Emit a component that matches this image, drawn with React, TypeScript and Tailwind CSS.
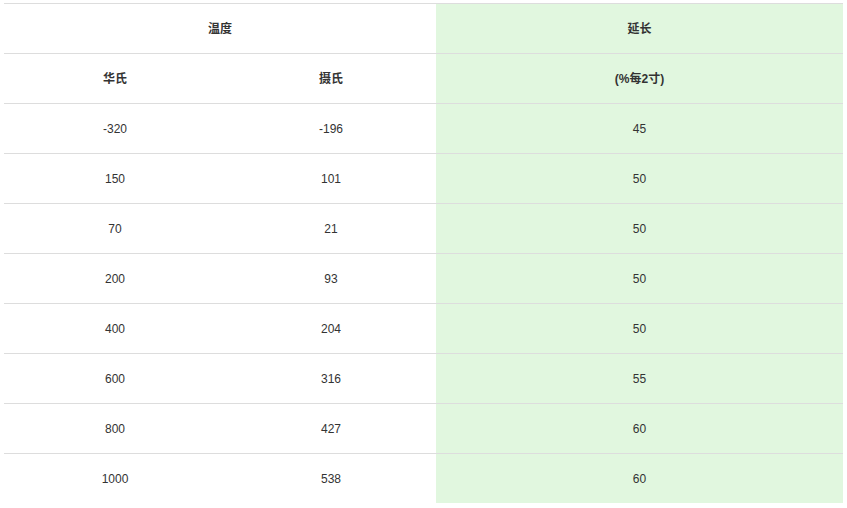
import React from "react";

const rows = [
  ["-320", "-196", "45"],
  ["150", "101", "50"],
  ["70", "21", "50"],
  ["200", "93", "50"],
  ["400", "204", "50"],
  ["600", "316", "55"],
  ["800", "427", "60"],
  ["1000", "538", "60"],
];

export default function App() {
  return (
    <div
      className="w-[847px] h-[508px] bg-white pt-[3px] px-[4px] text-[12px] text-[#333]"
      style={{ fontFamily: '"Liberation Sans", Arial, "Noto Sans CJK SC", sans-serif' }}
    >
      <div className="grid grid-cols-[222px_210px_407px]">
        <div className="col-span-2 h-[50px] border-t border-[#ddd] flex items-center justify-center font-bold">
          温度
        </div>
        <div className="h-[50px] border-t border-[#ddd] bg-[#e1f7df] flex items-center justify-center font-bold">
          延长
        </div>
        <div className="h-[50px] border-t border-[#ddd] flex items-center justify-center font-bold">华氏</div>
        <div className="h-[50px] border-t border-[#ddd] flex items-center justify-center font-bold">摄氏</div>
        <div className="h-[50px] border-t border-[#ddd] bg-[#e1f7df] flex items-center justify-center font-bold">
          (%每2寸)
        </div>
        {rows.map((r, i) => (
          <React.Fragment key={i}>
            <div className="h-[50px] border-t border-[#ddd] flex items-center justify-center">{r[0]}</div>
            <div className="h-[50px] border-t border-[#ddd] flex items-center justify-center">{r[1]}</div>
            <div className="h-[50px] border-t border-[#ddd] bg-[#e1f7df] flex items-center justify-center">{r[2]}</div>
          </React.Fragment>
        ))}
      </div>
    </div>
  );
}
